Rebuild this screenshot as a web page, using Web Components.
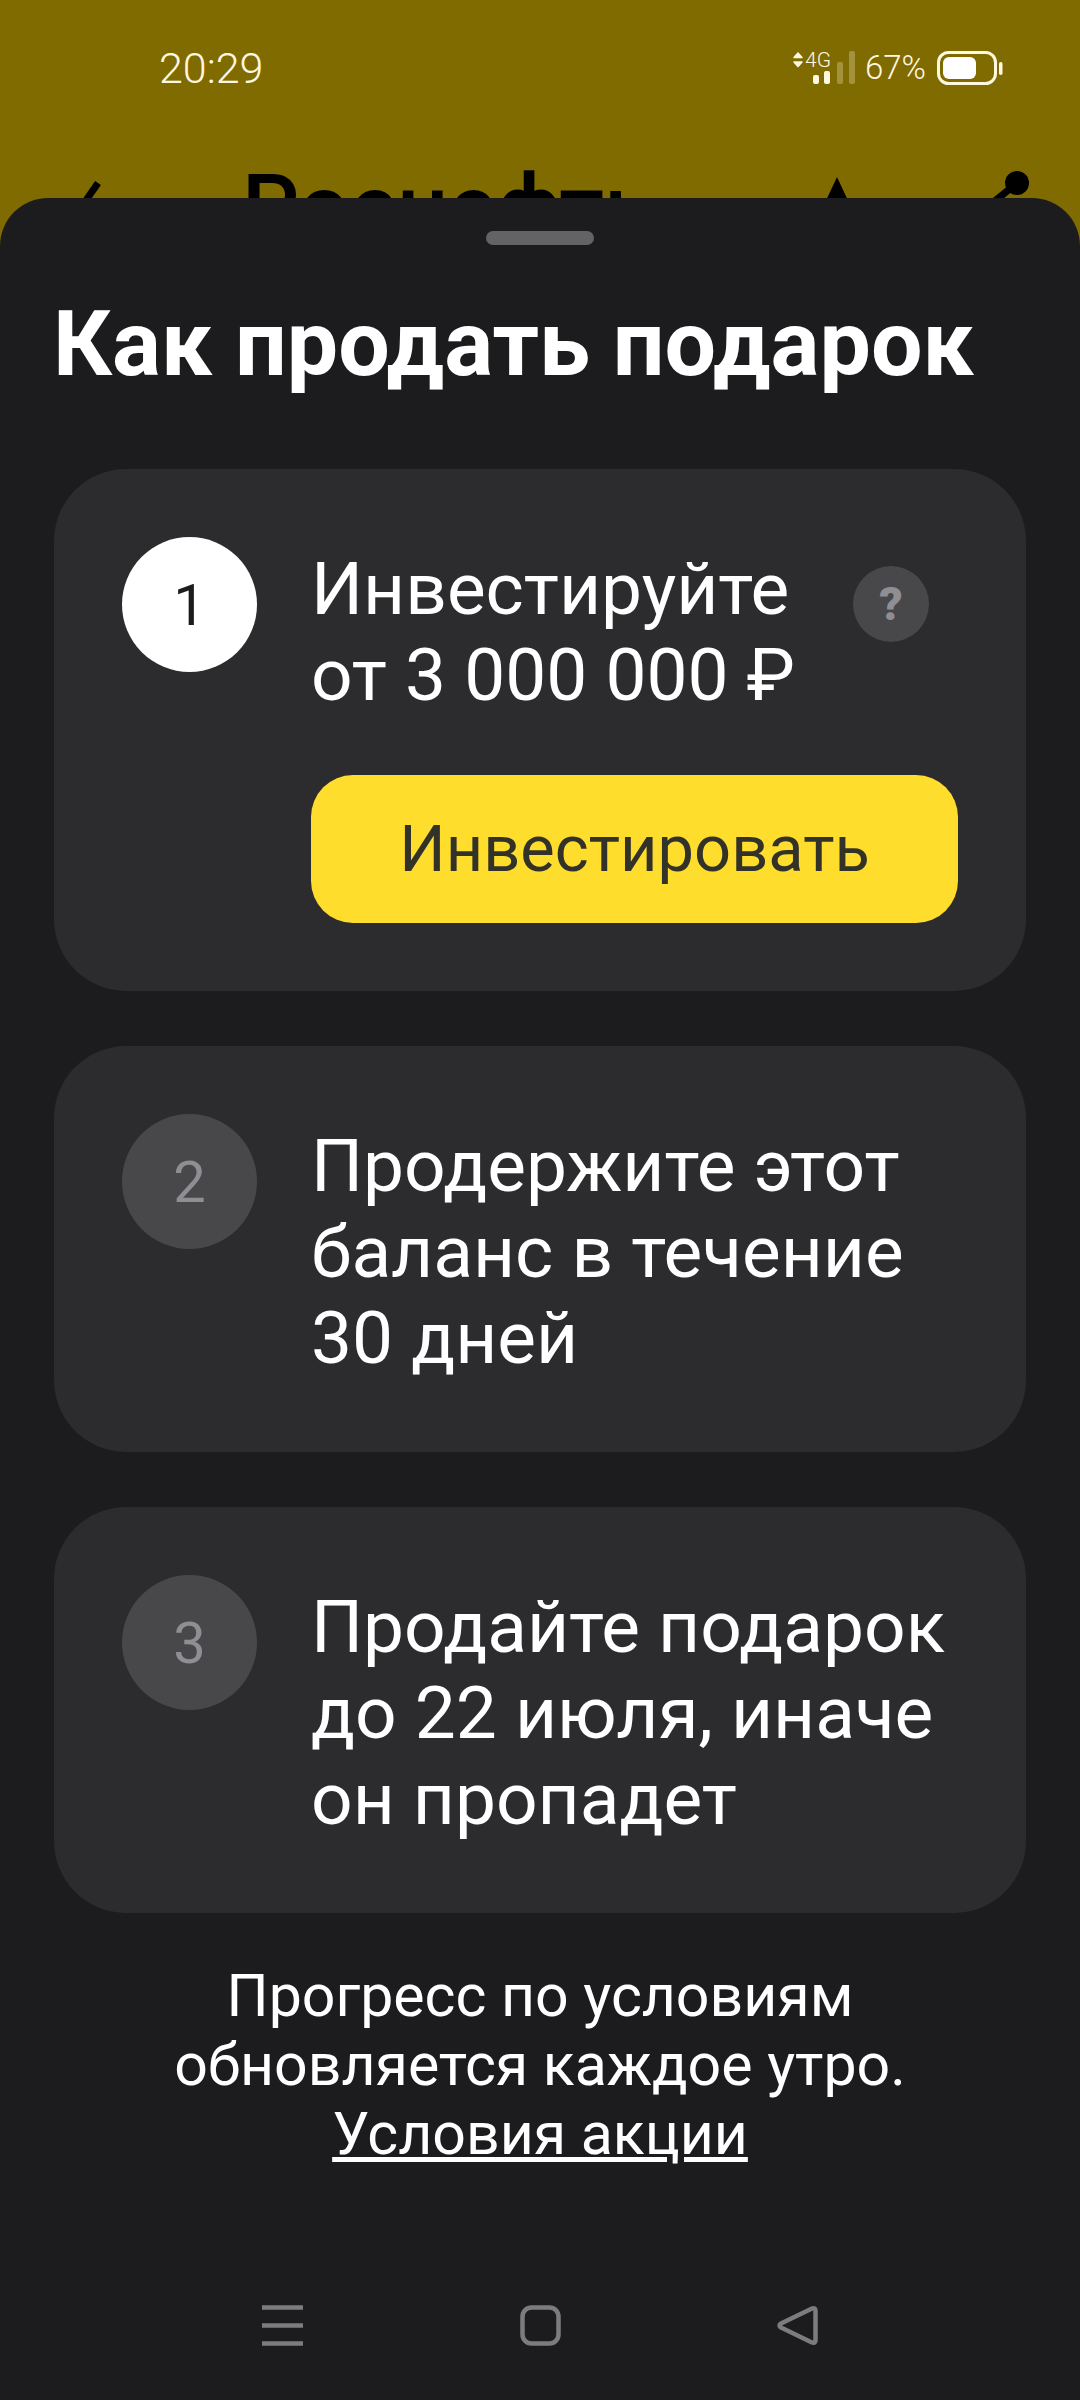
<!DOCTYPE html>
<html lang="ru">
<head>
<meta charset="utf-8">
<title>Как продать подарок</title>
<style>
  html, body { margin: 0; padding: 0; background: #1c1c1e; }
  body { width: 1080px; height: 2400px; overflow: hidden; font-family: Roboto, "Noto Sans", sans-serif; }
</style>
</head>
<body>
<app-screen>
  <top-bar></top-bar>
  <gift-sheet>
    <step-card number="1" active help>
      Инвестируйте<br>от 3 000 000 ₽
      <yellow-button slot="action">Инвестировать</yellow-button>
    </step-card>
    <step-card number="2">Продержите этот<br>баланс в течение<br>30 дней</step-card>
    <step-card number="3">Продайте подарок<br>до 22 июля, иначе<br>он пропадет</step-card>
    <sheet-note slot="note">Прогресс по условиям<br>обновляется каждое утро.<br><a>Условия акции</a></sheet-note>
    <nav-bar slot="nav"></nav-bar>
  </gift-sheet>
</app-screen>

<script>
(function() {
	function define(name, html) {
		const template = document.createElement("template");
		template.innerHTML = html;

		window.customElements.define(name, class extends HTMLElement {
			constructor() {
				super();
				this.attachShadow({mode: "open"});
				this.shadowRoot.appendChild(template.content.cloneNode(true));
			}
		});
	}

	define("app-screen", `
		<style>
			:host { display: flex; flex-direction: column; width: 1080px; height: 2400px; background: #806b00; }
		</style>
		<slot></slot>
	`);

	// the header runs on under the sheet, the sheet paints over it
	define("top-bar", `
		<style>
			:host { display: block; height: 198px; flex: none; }
			.status {
				display: flex; justify-content: space-between; align-items: center;
				height: 44px; padding: 46px 77px 0 159px;
				color: #fff8e0; font: 300 43px/44px Roboto, sans-serif;
			}
			.right { display: flex; align-items: center; }
			.pct { margin: 0 11px 0 9px; font-size: 33px; }
			.header {
				display: flex; align-items: flex-start;
				padding: 74px 42px 0 72px; height: 90px; color: #000;
			}
			.name { flex: 1; margin-left: 134px; font: 500 90px/90px Roboto, sans-serif; }
			.actions { display: flex; gap: 129px; }
			svg { display: block; }
		</style>
		<div class="status">
			<span>20:29</span>
			<span class="right">
				<svg width="64" height="44" viewBox="0 -5 64 44">
					<path d="M2 6.500L6 2l4 4.500zM2 11L6 15.500 10 11z" fill="#fff8e0" stroke="#fff8e0" stroke-width="1.500" stroke-linejoin="round"/>
					<text x="13" y="16" font-family="Roboto" font-size="21" font-weight="300" fill="#fff8e0" textLength="26" lengthAdjust="spacingAndGlyphs">4G</text>
					<rect x="21" y="24" width="6" height="9" rx="2" fill="#fff8e0"/>
					<rect x="32" y="20" width="6" height="13" rx="2" fill="#fff8e0"/>
					<rect x="45" y="11" width="6" height="22" rx="2" fill="#fff8e0" opacity=".28"/>
					<rect x="57" y="0" width="6" height="33" rx="2" fill="#fff8e0" opacity=".28"/>
				</svg>
				<span class="pct">67%</span>
				<svg width="66" height="34" viewBox="0 0 66 34">
					<rect x="1.500" y="1.500" width="57" height="31" rx="10" fill="none" stroke="#fff8e0" stroke-width="3"/>
					<rect x="6" y="6" width="33" height="22" rx="6" fill="#fff"/>
					<rect x="62" y="11" width="3.500" height="13" rx="1.750" fill="#fff8e0"/>
				</svg>
			</span>
		</div>
		<div class="header">
			<svg width="36" height="60" viewBox="0 0 36 60"><path d="M26 19L8 45" fill="none" stroke="#000" stroke-width="7"/></svg>
			<span class="name">Роснефть</span>
			<span class="actions">
				<svg width="44" height="60" viewBox="0 0 44 60"><path d="M22 13L44 60H0z" fill="#000"/></svg>
				<svg width="50" height="60" viewBox="0 0 50 60">
					<circle cx="29" cy="19" r="12" fill="#000"/>
					<path d="M29 19L2 41" stroke="#000" stroke-width="7"/>
				</svg>
			</span>
		</div>
	`);

	define("gift-sheet", `
		<style>
			:host {
				display: flex; flex-direction: column; flex: 1; box-sizing: border-box;
				position: relative; z-index: 1;
				background: #1c1c1e; border-radius: 48px 48px 0 0; padding: 33px 54px 0;
			}
			.handle { width: 108px; height: 14px; border-radius: 7px; background: #636366; align-self: center; flex: none; }
			h1 { margin: 49px 0 0 -1px; color: #fff; font: 700 91.400px/100px Roboto, sans-serif; white-space: nowrap; }
			.cards { display: flex; flex-direction: column; gap: 55px; margin-top: 75px; }
			.note { margin-top: 48px; }
			.nav { margin: auto -54px 0; }
		</style>
		<div class="handle"></div>
		<h1>Как продать подарок</h1>
		<div class="cards"><slot></slot></div>
		<div class="note"><slot name="note"></slot></div>
		<div class="nav"><slot name="nav"></slot></div>
	`);

	const stepTemplate = document.createElement("template");
	stepTemplate.innerHTML = `
		<style>
			:host {
				display: grid; grid-template-columns: 135px 1fr; column-gap: 54px;
				box-sizing: border-box; width: 972px;
				padding: 68px; border-radius: 72px; background: #2c2c2e;
				color: #fff; font: 400 73px/86px Roboto, sans-serif;
			}
			.circle {
				width: 135px; height: 135px; border-radius: 50%;
				display: flex; align-items: center; justify-content: center;
				background: #48484a; color: #8e8e93; font: 400 58px/1 Roboto, sans-serif;
			}
			:host([active]) .circle { background: #fff; color: #1c1c1e; }
			.head { display: flex; justify-content: space-between; align-items: flex-start; }
			.text { margin: 9px 0 3px; white-space: nowrap; }
			.help {
				display: none; width: 76px; height: 76px; border-radius: 50%; margin: 29px 29px 0 0;
				background: #48484a; color: #8e8e93; font: 900 46px/76px Roboto, sans-serif; text-align: center;
			}
			:host([help]) .help { display: block; }
			::slotted(yellow-button) { margin-top: 54px; }
		</style>
		<div class="circle"></div>
		<div class="body">
			<div class="head">
				<div class="text"><slot></slot></div>
				<div class="help">?</div>
			</div>
			<slot name="action"></slot>
		</div>
	`;

	class StepCard extends HTMLElement {
		constructor() {
			super();
			this.attachShadow({mode: "open"});
			this.shadowRoot.appendChild(stepTemplate.content.cloneNode(true));
		}

		connectedCallback() {
			this.shadowRoot.querySelector(".circle").textContent = this.getAttribute("number");
		}
	}

	window.customElements.define("step-card", StepCard);

	define("yellow-button", `
		<style>
			:host {
				display: flex; align-items: center; justify-content: center;
				width: 647px; height: 148px; border-radius: 42px;
				background: #ffdd2d; color: #333228; font: 400 65px/1 Roboto, sans-serif;
			}
		</style>
		<slot></slot>
	`);

	define("sheet-note", `
		<style>
			:host { display: block; text-align: center; color: #fff; font: 400 59px/69px Roboto, sans-serif; }
			::slotted(a) { color: #fff; text-decoration: underline; }
		</style>
		<slot></slot>
	`);

	define("nav-bar", `
		<style>
			:host { display: flex; justify-content: space-between; padding: 0 262px 54px 262px; }
			svg { display: block; fill: none; stroke: #7c7c7e; stroke-width: 4.500; }
		</style>
		<svg width="41" height="41" viewBox="0 0 41 41"><path d="M0 2.500h41M0 20.500h41M0 38.500h41"/></svg>
		<svg width="41" height="41" viewBox="0 0 41 41"><rect x="2.500" y="2.500" width="36" height="36" rx="9"/></svg>
		<svg width="41" height="41" viewBox="0 0 41 41"><path d="M35 3.500L4 18.500c-2 1.200-2 2.800 0 4l31 15c2 .8 3.500 0 3.500-2V5.500c0-2-1.500-2.800-3.500-2z" stroke-linejoin="round"/></svg>
	`);
})();
</script>
</body>
</html>
